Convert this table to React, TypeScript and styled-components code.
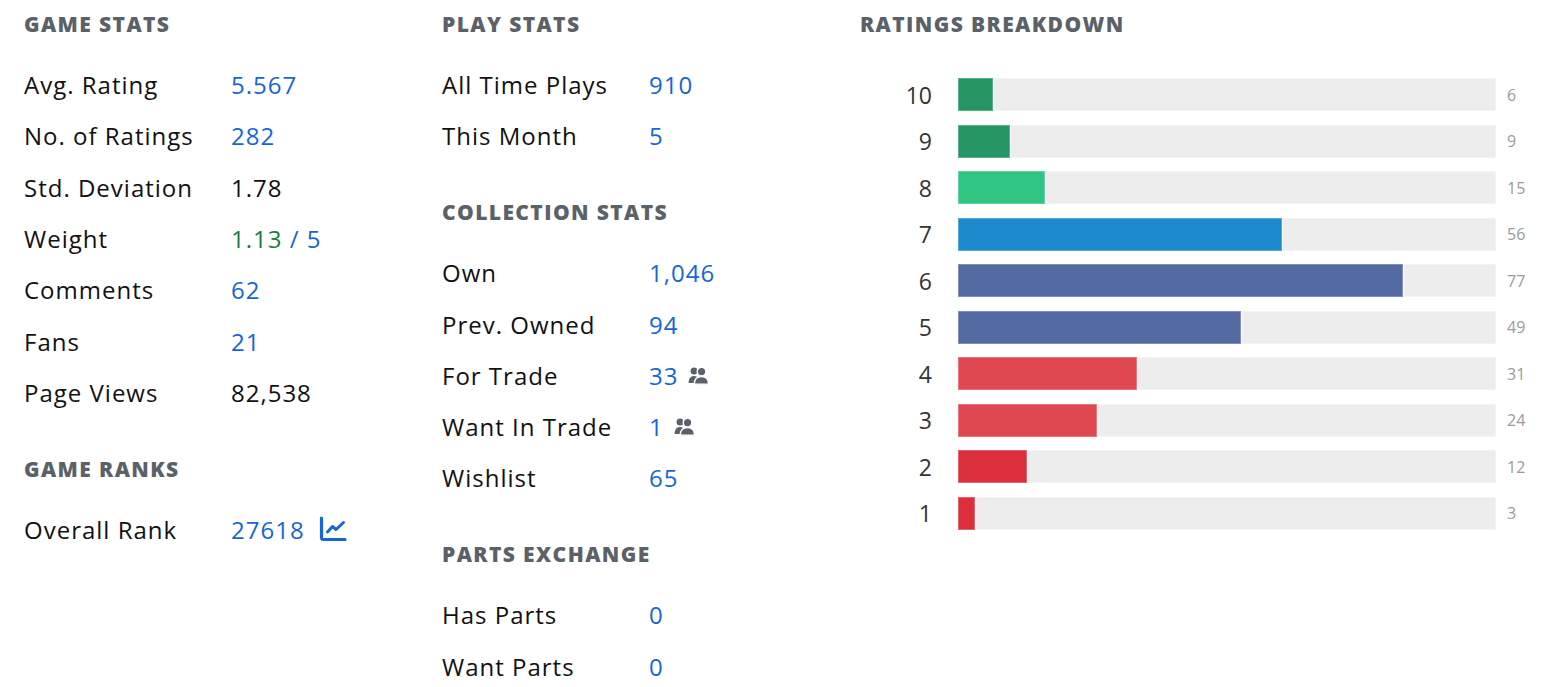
import React from 'react'
import styled, { createGlobalStyle } from 'styled-components'

const GlobalStyle = createGlobalStyle`
  html, body {
    margin: 0;
    padding: 0;
    background: #ffffff;
  }
  body {
    font-family: 'Open Sans', Lato, sans-serif;
    color: #111111;
  }
`

const Page = styled.div`
  display: grid;
  grid-template-columns: 418px 418px 1fr;
  padding: 12px 0 0 24px;
`

const Column = styled.div`
  display: flex;
  flex-direction: column;
`

const Section = styled.section`
  & + & {
    margin-top: 38.5px;
  }
`

const Heading = styled.h3`
  margin: 0 0 23px;
  font-size: 21px;
  line-height: 24px;
  font-weight: 800;
  letter-spacing: 1.4px;
  text-transform: uppercase;
  color: #5b6168;
`

const StatRow = styled.div`
  display: grid;
  grid-template-columns: 207px auto;
  align-items: center;
  height: 51.3px;
  font-size: 24px;
  letter-spacing: 1px;
`

const Label = styled.span`
  color: #111111;
`

const Value = styled.span<{ $tone?: 'link' | 'plain' }>`
  display: inline-flex;
  align-items: center;
  gap: 10px;
  color: ${props => (props.$tone === 'plain' ? '#111111' : '#1566d6')};
`

const Link = styled.span`
  color: #1566d6;
`

const Weight = styled.span`
  color: #1f7a45;
`

const Bars = styled.div`
  display: flex;
  flex-direction: column;
  gap: 13.5px;
  margin-top: 42px;
`

const BarRow = styled.div`
  display: grid;
  grid-template-columns: 98px 538px auto;
  align-items: center;
  height: 33px;
`

const BarLabel = styled.span`
  padding-right: 26px;
  text-align: right;
  font-size: 23px;
  color: #333333;
`

const Track = styled.div`
  height: 33px;
  background: #ededed;
  box-shadow: inset 0 0 0 1px #f4f4f4;
`

const Fill = styled.div<{ $color: string }>`
  height: 100%;
  background: ${props => props.$color};
  box-shadow: inset 0 0 0 1px rgba(255, 255, 255, 0.25), 1px 0 0 #ffffff;
`

const Count = styled.span`
  padding-left: 11px;
  font-size: 16px;
  color: #9a9a9a;
`

const IconSlot = styled.span<{ $tone?: string; $offset?: number }>`
  display: inline-flex;
  margin-left: ${props => props.$offset || 0}px;
  color: ${props => props.$tone || '#5a616b'};
`

const PeopleIcon = () => (
  <IconSlot>
    <svg width="21" height="19" viewBox="0 0 18 16" fill="currentColor">
      <circle cx="5.2" cy="4.2" r="3" />
      <path d="M0.5 14.5 C0.5 10.5 2.3 8.4 5.2 8.4 C7 8.4 8.2 9.2 8.8 10.5 L8.8 14.5 Z" />
      <circle cx="11.6" cy="4.6" r="3.7" stroke="#ffffff" strokeWidth="1.2" />
      <path
        d="M5.4 15.4 C5.4 11.2 7.8 9 11.6 9 C15.4 9 17.6 11.2 17.6 15.4 Z"
        stroke="#ffffff"
        strokeWidth="1.2"
      />
    </svg>
  </IconSlot>
)

const ChartIcon = () => (
  <IconSlot $tone="#1566d6" $offset={4}>
    <svg width="28" height="26" viewBox="0 0 28 26" fill="none" stroke="currentColor">
      <path d="M2.5 2 V21.5 a2 2 0 0 0 2 2 H26" strokeWidth="3.2" strokeLinecap="round" />
      <path
        d="M8.5 16 L13.5 10.5 L17 13.5 L24.5 6.5"
        strokeWidth="3"
        strokeLinecap="round"
        strokeLinejoin="round"
      />
    </svg>
  </IconSlot>
)

const ratings = [
  { score: 10, count: 6, color: '#249563' },
  { score: 9, count: 9, color: '#249563' },
  { score: 8, count: 15, color: '#2fc482' },
  { score: 7, count: 56, color: '#1d8acd' },
  { score: 6, count: 77, color: '#5369a2' },
  { score: 5, count: 49, color: '#5369a2' },
  { score: 4, count: 31, color: '#df4751' },
  { score: 3, count: 24, color: '#df4751' },
  { score: 2, count: 12, color: '#db303b' },
  { score: 1, count: 3, color: '#db303b' },
]

// the widest bar stops short of the end of its track
const SCALE = 93

export default function App() {
  return (
    <>
      <GlobalStyle />
      <Page>
        <Column>
          <Section>
            <Heading>Game Stats</Heading>
            <StatRow>
              <Label>Avg. Rating</Label>
              <Value>5.567</Value>
            </StatRow>
            <StatRow>
              <Label>No. of Ratings</Label>
              <Value>282</Value>
            </StatRow>
            <StatRow>
              <Label>Std. Deviation</Label>
              <Value $tone="plain">1.78</Value>
            </StatRow>
            <StatRow>
              <Label>Weight</Label>
              <Value>
                <span>
                  <Weight>1.13</Weight>
                  <Link> / 5</Link>
                </span>
              </Value>
            </StatRow>
            <StatRow>
              <Label>Comments</Label>
              <Value>62</Value>
            </StatRow>
            <StatRow>
              <Label>Fans</Label>
              <Value>21</Value>
            </StatRow>
            <StatRow>
              <Label>Page Views</Label>
              <Value $tone="plain">82,538</Value>
            </StatRow>
          </Section>
          <Section>
            <Heading>Game Ranks</Heading>
            <StatRow>
              <Label>Overall Rank</Label>
              <Value>
                27618 <ChartIcon />
              </Value>
            </StatRow>
          </Section>
        </Column>

        <Column>
          <Section>
            <Heading>Play Stats</Heading>
            <StatRow>
              <Label>All Time Plays</Label>
              <Value>910</Value>
            </StatRow>
            <StatRow>
              <Label>This Month</Label>
              <Value>5</Value>
            </StatRow>
          </Section>
          <Section>
            <Heading>Collection Stats</Heading>
            <StatRow>
              <Label>Own</Label>
              <Value>1,046</Value>
            </StatRow>
            <StatRow>
              <Label>Prev. Owned</Label>
              <Value>94</Value>
            </StatRow>
            <StatRow>
              <Label>For Trade</Label>
              <Value>
                33 <PeopleIcon />
              </Value>
            </StatRow>
            <StatRow>
              <Label>Want In Trade</Label>
              <Value>
                1 <PeopleIcon />
              </Value>
            </StatRow>
            <StatRow>
              <Label>Wishlist</Label>
              <Value>65</Value>
            </StatRow>
          </Section>
          <Section>
            <Heading>Parts Exchange</Heading>
            <StatRow>
              <Label>Has Parts</Label>
              <Value>0</Value>
            </StatRow>
            <StatRow>
              <Label>Want Parts</Label>
              <Value>0</Value>
            </StatRow>
          </Section>
        </Column>

        <Column>
          <Section>
            <Heading>Ratings Breakdown</Heading>
            <Bars>
              {ratings.map(r => (
                <BarRow key={r.score}>
                  <BarLabel>{r.score}</BarLabel>
                  <Track>
                    <Fill $color={r.color} style={{ width: `${(r.count / SCALE) * 100}%` }} />
                  </Track>
                  <Count>{r.count}</Count>
                </BarRow>
              ))}
            </Bars>
          </Section>
        </Column>
      </Page>
    </>
  )
}
